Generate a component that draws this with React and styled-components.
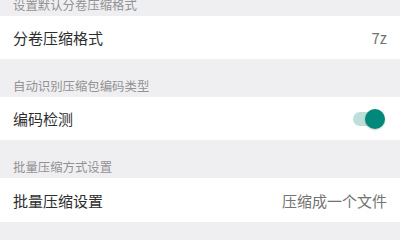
import React from "react";
import styled, { createGlobalStyle } from "styled-components";

const Global = createGlobalStyle`
  html, body { margin: 0; padding: 0; background: #efeff1; }
  body { font-family: "Noto Sans CJK SC", "Noto Sans", sans-serif; }
`;

const Page = styled.div`
  width: 400px;
  height: 230px;
  overflow: hidden;
  background: #efeff1;
  display: flex;
  flex-direction: column;
`;

const SectionHeader = styled.div`
  height: ${(p) => p.$h}px;
  flex: none;
  display: flex;
  align-items: flex-end;
  padding: 0 13px 3px;
  box-sizing: border-box;
  font-size: 12.4px;
  line-height: 16px;
  color: #929294;
  overflow: hidden;
`;

const Row = styled.div`
  height: ${(p) => p.$h}px;
  flex: none;
  background: #ffffff;
  display: flex;
  align-items: center;
  justify-content: space-between;
  padding: 0 13px;
  box-sizing: border-box;
`;

const Title = styled.span`
  font-size: 15px;
  color: #2e2e2e;
`;

const Value = styled.span`
  font-size: 15px;
  color: #737373;
`;

const SwitchTrack = styled.div`
  position: relative;
  width: 30px;
  height: 14px;
  border-radius: 7px;
  background: #bcdfda;
  margin-right: 4px;
`;

const SwitchThumb = styled.div`
  position: absolute;
  right: -2px;
  top: -3px;
  width: 20px;
  height: 20px;
  border-radius: 50%;
  background: #00897b;
  box-shadow: 0 1px 2px rgba(0, 0, 0, 0.22);
`;

export default function App() {
  return (
    <Page>
      <Global />
      <SectionHeader $h={16}>设置默认分卷压缩格式</SectionHeader>
      <Row $h={43}>
        <Title>分卷压缩格式</Title>
        <Value>7z</Value>
      </Row>
      <SectionHeader $h={38}>自动识别压缩包编码类型</SectionHeader>
      <Row $h={43}>
        <Title>编码检测</Title>
        <SwitchTrack>
          <SwitchThumb />
        </SwitchTrack>
      </Row>
      <SectionHeader $h={38}>批量压缩方式设置</SectionHeader>
      <Row $h={44}>
        <Title>批量压缩设置</Title>
        <Value>压缩成一个文件</Value>
      </Row>
    </Page>
  );
}
